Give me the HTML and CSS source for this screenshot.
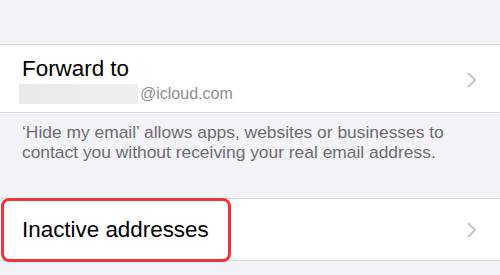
FILE: index.html
```html
<!DOCTYPE html>
<html>
<head>
<meta charset="utf-8">
<link rel="stylesheet" href="styles.css">
</head>
<body>
<div class="page">
  <div class="spacer"></div>
  <div class="group">
    <div class="row row-tall">
      <div class="row-text">
        <div class="title">Forward to</div>
        <div class="sub"><span class="blur"></span><span class="domain">@icloud.com</span></div>
      </div>
      <svg class="chev" width="10" height="16" viewBox="0 0 10 16"><polyline points="1.5,1.5 8,8 1.5,14.5" fill="none" stroke="#c4c4c8" stroke-width="1.8" stroke-linecap="round" stroke-linejoin="round"/></svg>
    </div>
  </div>
  <div class="footer">‘Hide my email’ allows apps, websites or businesses to contact you without receiving your real email address.</div>
  <div class="group highlight-wrap">
    <div class="row row-short">
      <div class="title">Inactive addresses</div>
      <svg class="chev" width="10" height="16" viewBox="0 0 10 16"><polyline points="1.5,1.5 8,8 1.5,14.5" fill="none" stroke="#c4c4c8" stroke-width="1.8" stroke-linecap="round" stroke-linejoin="round"/></svg>
    </div>
    <div class="highlight"></div>
  </div>
</div>
</body>
</html>
```

FILE: styles.css
```css
html, body {
  margin: 0;
  padding: 0;
  background: #f2f2f7;
}
body {
  width: 500px;
  height: 275px;
  overflow: hidden;
  font-family: "Liberation Sans", Arial, sans-serif;
}
.spacer {
  height: 44px;
}
.group {
  background: #ffffff;
  border-top: 1px solid #d8d8dc;
  border-bottom: 1px solid #d8d8dc;
}
.row {
  display: flex;
  align-items: center;
  justify-content: space-between;
  padding: 0 23px 0 22px;
}
.row-tall {
  height: 67px;
  align-items: flex-start;
}
.row-tall .row-text {
  padding-top: 11px;
  display: flex;
  flex-direction: column;
  gap: 2px;
}
.row-tall .chev {
  margin-top: 27px;
}
.row-short {
  height: 61px;
}
.title {
  font-size: 22.4px;
  line-height: 26px;
  color: #000000;
}
.sub {
  display: flex;
  align-items: center;
  font-size: 16px;
  line-height: 20px;
  margin-left: -3px;
}
.blur {
  display: inline-block;
  width: 119px;
  height: 20px;
  background: linear-gradient(90deg, #e9e9ea 0%, #ececed 40%, #efeff0 100%);
  margin-right: 2px;
}
.domain {
  color: #8e8e93;
}
.footer {
  padding: 9px 14px 0 22px;
  height: 76px;
  font-size: 17.4px;
  line-height: 20px;
  color: #6d6d72;
}
.highlight-wrap {
  position: relative;
}
.highlight {
  position: absolute;
  left: 1px;
  top: -1px;
  width: 224px;
  height: 58px;
  border: 3px solid #f2333b;
  border-radius: 8px;
  pointer-events: none;
}
```
